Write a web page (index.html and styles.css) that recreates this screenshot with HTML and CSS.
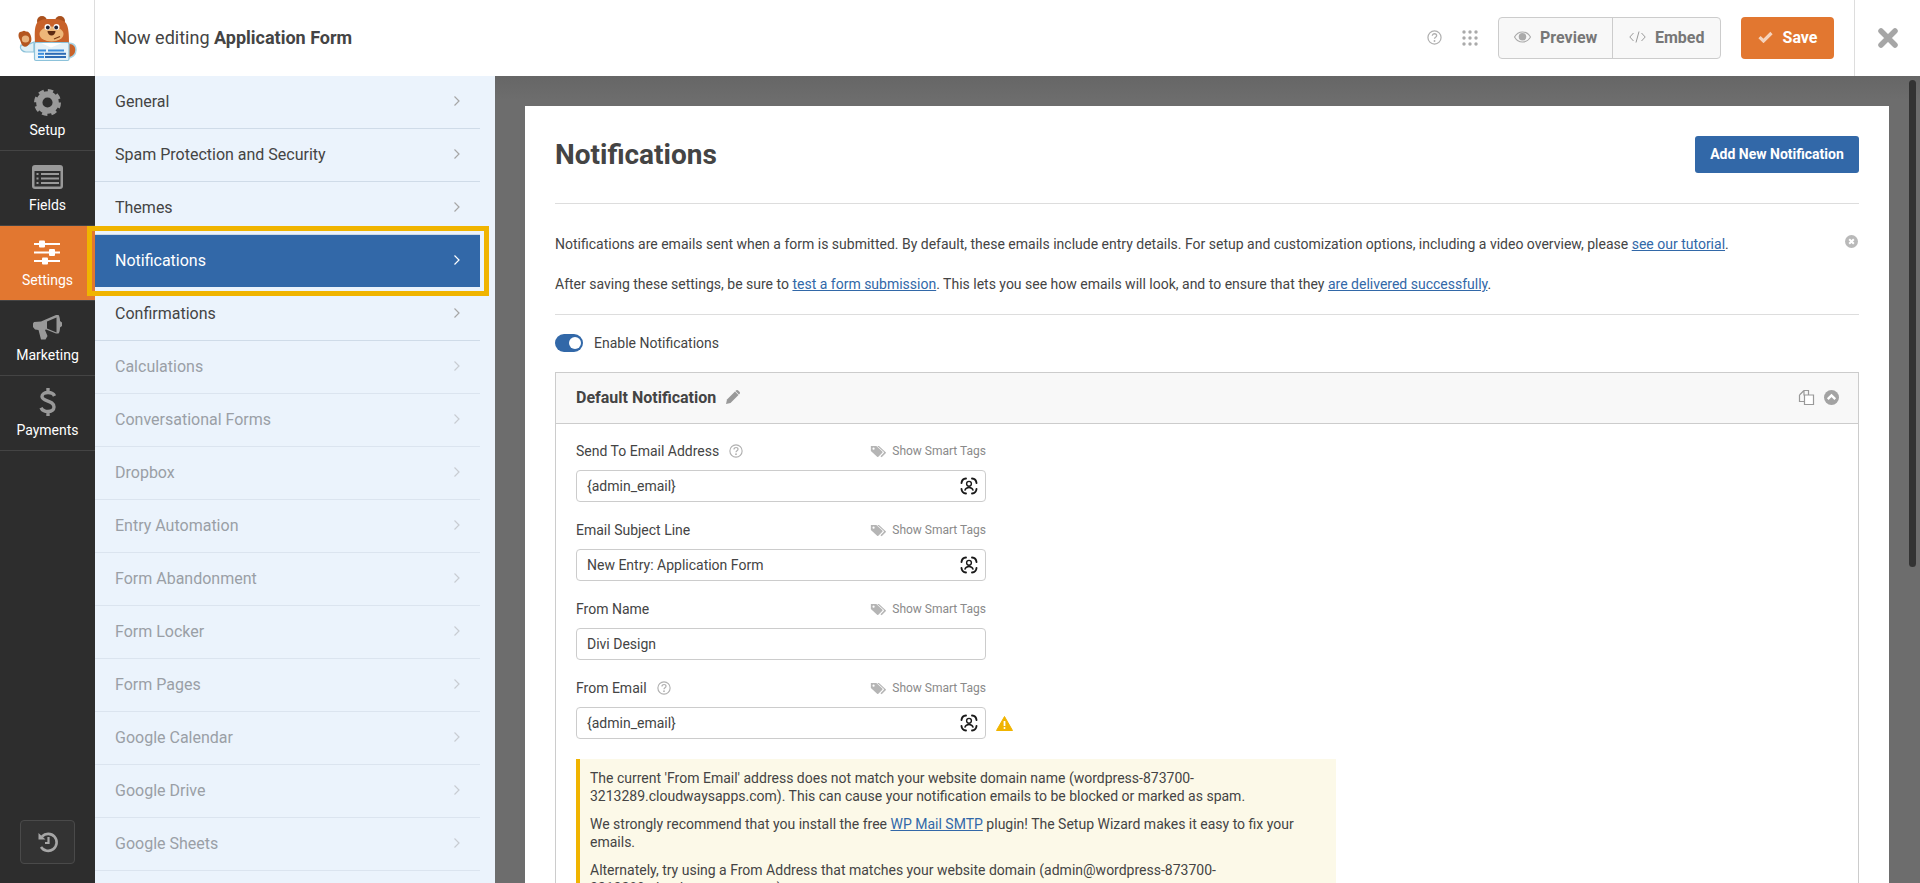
FILE: index.html
```html
<!DOCTYPE html>
<html lang="en">
<head>
<meta charset="utf-8">
<title>Application Form</title>
<link rel="stylesheet" href="styles.css">
</head>
<body>
<svg class="defs" width="0" height="0" aria-hidden="true">
  <symbol id="qm" viewBox="0 0 16 16"><circle cx="8" cy="8" r="7" fill="none" stroke="currentColor" stroke-width="1.300"/><path d="M5.700 6.200c0-1.400 1.100-2.200 2.300-2.200 1.300 0 2.300.8 2.300 2 0 1.700-2.300 1.700-2.300 3.400" fill="none" stroke="currentColor" stroke-width="1.400"/><circle cx="8" cy="11.700" r="1" fill="currentColor"/></symbol>
  <symbol id="tag" viewBox="0 0 20 15"><path d="M1 1h6.500l7 6.600a1 1 0 0 1 0 1.400l-4.700 4.700a1 1 0 0 1-1.400 0L1 6.800z" fill="currentColor"/><path d="M10.500 1l8 7.300a1 1 0 0 1 0 1.400l-4.800 4.600-1.400-1.300 3.800-3.700a1 1 0 0 0 0-1.400L8.500 1z" fill="currentColor"/><circle cx="4.200" cy="4.200" r="1.300" fill="#fff"/></symbol>
  <symbol id="smart" viewBox="0 0 18 18"><g fill="none" stroke="#1a1a1a" stroke-width="1.900" stroke-linecap="round"><path d="M1.500 6C1.700 3.500 3.500 1.700 6 1.500"/><path d="M12 1.500C14.500 1.700 16.300 3.500 16.500 6"/><path d="M1.500 12C1.700 14.500 3.500 16.300 6 16.500"/><path d="M12 16.500C14.500 16.300 16.300 14.500 16.500 12"/></g><circle cx="9" cy="6.800" r="2.400" fill="none" stroke="#1a1a1a" stroke-width="1.400"/><path d="M4.800 13.600c.5-2.200 2.200-3.100 4.200-3.100s3.700.9 4.200 3.100" fill="none" stroke="#1a1a1a" stroke-width="1.400"/></symbol>
  <symbol id="chev" viewBox="0 0 8 12"><path d="M1.500 1.500 6 6l-4.500 4.500" fill="none" stroke="currentColor" stroke-width="1.200"/></symbol>
</svg>

<header class="topbar">
  <div class="logo">
    <svg width="94" height="76" viewBox="0 0 94 76">
      <path d="M66 44c5-2 10 0 10 6 0 5-4 8-9 8z" fill="#c8622a" stroke="#a9d4e6" stroke-width="1.500"/>
      <path d="M21 45c5 1 9-1 13-3v10H26c-3 0-7-3-5-7z" fill="#dff0f6" stroke="#8cc2da" stroke-width="1.200"/>
      <path d="M20 40c-2-3-2-7 0-8l2-.5 2-.8 2 .8 2 .3c3 2 4 7 3 10-2 3-4 5-6 5-3 0-4-4-5-7z" fill="#b4561f"/>
      <ellipse cx="25.500" cy="39" rx="3.700" ry="3.600" fill="#e8b37e"/>
      <circle cx="42" cy="21" r="5" fill="#a9501d"/><circle cx="60" cy="21" r="5" fill="#a9501d"/>
      <path d="M36 25c2-5 6-6 15-6s14 1 16 6c2 5 2 13 2 20H35c0-7-1-15 1-20z" fill="#c8622a"/>
      <ellipse cx="51.500" cy="34" rx="12" ry="7.500" fill="#eeb779"/>
      <circle cx="47.500" cy="27" r="3" fill="#fff"/><circle cx="56.500" cy="27" r="3" fill="#fff"/>
      <circle cx="47.800" cy="27.500" r="1.900" fill="#223"/><circle cx="56.200" cy="27.500" r="1.900" fill="#223"/>
      <path d="M47.500 31h8c0 2.500-2 4.500-4 4.500s-4-2-4-4.500z" fill="#5c2a12"/>
      <path d="M54 39l6-2.500" stroke="#7a3a14" stroke-width="1.300"/>
      <rect x="34.500" y="42.500" width="34.500" height="18" rx="1.500" fill="#e5f2f8" stroke="#8cc2da" stroke-width="1.200"/>
      <path d="M41 43l10 4.500 11-4.500z" fill="#fff"/>
      <rect x="38" y="49.500" width="8" height="2" fill="#3c8ddc"/><rect x="48" y="49.500" width="16" height="2" fill="#3c8ddc"/>
      <rect x="38" y="52.800" width="6" height="2" fill="#3c8ddc"/><rect x="45" y="52.800" width="21" height="2" fill="#2d6bb5"/>
      <rect x="38" y="56" width="6" height="2" fill="#3c8ddc"/><rect x="45" y="56" width="21" height="2" fill="#2d6bb5"/>
    </svg>
  </div>
  <div class="editing">Now editing <strong>Application Form</strong></div>
  <div class="top-actions">
    <svg class="top-help"><use href="#qm"/></svg>
    <svg class="top-grid" viewBox="0 0 16 16">
      <g fill="#aaa"><circle cx="2" cy="2" r="1.700"/><circle cx="8" cy="2" r="1.700"/><circle cx="14" cy="2" r="1.700"/><circle cx="2" cy="8" r="1.700"/><circle cx="8" cy="8" r="1.700"/><circle cx="14" cy="8" r="1.700"/><circle cx="2" cy="14" r="1.700"/><circle cx="8" cy="14" r="1.700"/><circle cx="14" cy="14" r="1.700"/></g>
    </svg>
    <div class="btn-group">
      <div class="btn-light btn-preview">
        <svg width="17" height="12" viewBox="0 0 17 12"><path d="M.5 6C2.500 2.500 5.300 1 8.500 1s6 1.500 8 5c-2 3.500-4.800 5-8 5s-6-1.500-8-5z" fill="none" stroke="#aaa" stroke-width="1.100"/><circle cx="8.500" cy="5.800" r="3.800" fill="#aaa"/></svg>
        <span>Preview</span>
      </div>
      <div class="btn-light btn-embed">
        <svg width="17" height="12" viewBox="0 0 17 12"><path d="M4.500 2 .8 6l3.700 4M12.500 2l3.700 4-3.700 4M10 .5 7 11.500" fill="none" stroke="#999" stroke-width="1"/></svg>
        <span>Embed</span>
      </div>
    </div>
    <div class="btn-save">
      <svg width="15" height="12" viewBox="0 0 15 12"><path d="M1.500 6.200 5.500 10 13.500 2" fill="none" stroke="#f5d3bd" stroke-width="3.200"/></svg>
      <span>Save</span>
    </div>
    <div class="close-zone">
      <svg width="20" height="20" viewBox="0 0 20 20"><path d="M3 3l14 14M17 3 3 17" stroke="#a6a6a6" stroke-width="5.500" stroke-linecap="round"/></svg>
    </div>
  </div>
</header>

<div class="main">
  <nav class="rail">
    <div class="rail-item">
      <div class="rail-icon"><svg width="27" height="27" viewBox="0 0 28 28"><circle cx="14" cy="14" r="8.500" fill="none" stroke="#999" stroke-width="6.500"/><circle cx="14" cy="14" r="12" fill="none" stroke="#999" stroke-width="4" stroke-dasharray="5.400 4.020"/></svg></div>
      <span>Setup</span>
    </div>
    <div class="rail-item">
      <div class="rail-icon"><svg width="31" height="24" viewBox="0 0 31 24"><rect x="0" y="0" width="31" height="24" rx="3" fill="#999"/><rect x="2.500" y="6" width="26" height="15.500" fill="#2d2d2d"/><g fill="#999"><rect x="4.500" y="8" width="2" height="2"/><rect x="4.500" y="12.500" width="2" height="2"/><rect x="4.500" y="17" width="2" height="2"/><rect x="9" y="8" width="18" height="2"/><rect x="9" y="12.500" width="18" height="2"/><rect x="9" y="17" width="18" height="2"/></g></svg></div>
      <span>Fields</span>
    </div>
    <div class="rail-item active">
      <div class="rail-icon"><svg width="28" height="25" viewBox="0 0 28 25"><g fill="#fff"><rect x="0" y="3" width="26" height="2"/><rect x="0" y="11.500" width="26" height="2"/><rect x="0" y="20" width="26" height="2"/><rect x="5" y=".5" width="6" height="7" rx="1"/><rect x="15" y="9" width="6" height="7" rx="1"/><rect x="8" y="17.500" width="6" height="7" rx="1"/></g></svg></div>
      <span>Settings</span>
    </div>
    <div class="rail-item">
      <div class="rail-icon"><svg width="31" height="26" viewBox="0 0 31 26"><path d="M1 9.500 2 8l7-.5 15-6.500h2.500c1 1 1.500 4 1.500 6l2 1.500V12l-2 1.500c0 2-.5 5-1.500 6H24l-10-4-1 .5 2.500 6-2 3.500H9L6.500 16 3 15.500 1 13z" fill="#999"/><path d="M24.500 3.500v15L15 14.600V7.500z" fill="#2d2d2d"/></svg></div>
      <span>Marketing</span>
    </div>
    <div class="rail-item">
      <div class="rail-icon"><svg width="18" height="30" viewBox="0 0 18 30"><path d="M15.500 9c-1-2.500-3.500-3.500-6.500-3.500C5.500 5.500 3 7 3 9.500 3 15 15 12.500 15 20c0 2.800-2.500 4.500-6 4.500-3.200 0-5.800-1.200-7-3.800M9 1v4.500M9 24.500V29" fill="none" stroke="#999" stroke-width="3.400"/></svg></div>
      <span>Payments</span>
    </div>
    <div class="rail-history">
      <svg width="22" height="22" viewBox="0 0 22 22"><path d="M5 5.500A8.500 8.500 0 1 1 4 16" fill="none" stroke="#a6a6a6" stroke-width="2.600"/><path d="M1.500 2 8.500 8.500H1.500z" fill="#a6a6a6"/><path d="M11.500 6v6H8" fill="none" stroke="#a6a6a6" stroke-width="2.200"/></svg>
    </div>
  </nav>

  <aside class="panel">
    <div class="row"><span>General</span><svg class="chev"><use href="#chev"/></svg></div>
    <div class="row"><span>Spam Protection and Security</span><svg class="chev"><use href="#chev"/></svg></div>
    <div class="row"><span>Themes</span><svg class="chev"><use href="#chev"/></svg></div>
    <div class="row current"><span>Notifications</span><svg class="chev"><use href="#chev"/></svg></div>
    <div class="row"><span>Confirmations</span><svg class="chev"><use href="#chev"/></svg></div>
    <div class="row off"><span>Calculations</span><svg class="chev"><use href="#chev"/></svg></div>
    <div class="row off"><span>Conversational Forms</span><svg class="chev"><use href="#chev"/></svg></div>
    <div class="row off"><span>Dropbox</span><svg class="chev"><use href="#chev"/></svg></div>
    <div class="row off"><span>Entry Automation</span><svg class="chev"><use href="#chev"/></svg></div>
    <div class="row off"><span>Form Abandonment</span><svg class="chev"><use href="#chev"/></svg></div>
    <div class="row off"><span>Form Locker</span><svg class="chev"><use href="#chev"/></svg></div>
    <div class="row off"><span>Form Pages</span><svg class="chev"><use href="#chev"/></svg></div>
    <div class="row off"><span>Google Calendar</span><svg class="chev"><use href="#chev"/></svg></div>
    <div class="row off"><span>Google Drive</span><svg class="chev"><use href="#chev"/></svg></div>
    <div class="row off"><span>Google Sheets</span><svg class="chev"><use href="#chev"/></svg></div>
  </aside>

  <main class="content">
    <section class="card">
      <div class="card-head">
        <h1>Notifications</h1>
        <div class="btn-add">Add New Notification</div>
      </div>
      <div class="intro">
        <svg class="dismiss" width="13" height="13" viewBox="0 0 13 13"><circle cx="6.500" cy="6.500" r="6.500" fill="#b9b9b9"/><path d="M4.200 4.200l4.600 4.600M8.800 4.200 4.200 8.800" stroke="#fff" stroke-width="2"/></svg>
        <p>Notifications are emails sent when a form is submitted. By default, these emails include entry details. For setup and customization options, including a video overview, please <a href="#">see our tutorial</a>.</p>
        <p>After saving these settings, be sure to <a href="#">test a form submission</a>. This lets you see how emails will look, and to ensure that they <a href="#">are delivered successfully</a>.</p>
      </div>
      <div class="toggle-row">
        <span class="toggle"></span>
        <span>Enable Notifications</span>
      </div>
      <div class="box">
        <div class="box-head">
          <strong>Default Notification</strong>
          <svg class="pencil" width="14" height="14" viewBox="0 0 14 14"><path d="M0 14l1-4.500L9 1.500 12.500 5l-8 8z" fill="#999"/><path d="M10 .5c.8-.7 1.500-.7 2.200 0l1.300 1.300c.7.700.7 1.400 0 2.200l-.6.600L9.400 1.100z" fill="#999"/></svg>
          <div class="box-tools">
            <svg width="17" height="17" viewBox="0 0 17 17"><path d="M6 6.500V1.500H10.500V6M1.500 6 6 1.500M1.500 6v6.500H6" fill="none" stroke="#999" stroke-width="1.200"/><path d="M6.500 6H15.500V15.500H6.500z" fill="#fff" stroke="#999" stroke-width="1.200"/></svg>
            <svg width="15" height="15" viewBox="0 0 14 14"><circle cx="7" cy="7" r="7" fill="#a3a3a3"/><path d="M3.500 8.500 7 5l3.500 3.500" fill="none" stroke="#fff" stroke-width="2.200"/></svg>
          </div>
        </div>
        <div class="box-body">
          <div class="field">
            <div class="field-top">
              <label>Send To Email Address</label><svg class="field-help"><use href="#qm"/></svg>
              <div class="smart"><svg class="tag"><use href="#tag"/></svg>Show Smart Tags</div>
            </div>
            <div class="input">{admin_email}<svg class="smart-icon"><use href="#smart"/></svg></div>
          </div>
          <div class="field">
            <div class="field-top">
              <label>Email Subject Line</label>
              <div class="smart"><svg class="tag"><use href="#tag"/></svg>Show Smart Tags</div>
            </div>
            <div class="input">New Entry: Application Form<svg class="smart-icon"><use href="#smart"/></svg></div>
          </div>
          <div class="field">
            <div class="field-top">
              <label>From Name</label>
              <div class="smart"><svg class="tag"><use href="#tag"/></svg>Show Smart Tags</div>
            </div>
            <div class="input">Divi Design</div>
          </div>
          <div class="field">
            <div class="field-top">
              <label>From Email</label><svg class="field-help"><use href="#qm"/></svg>
              <div class="smart"><svg class="tag"><use href="#tag"/></svg>Show Smart Tags</div>
            </div>
            <div class="input-wrap">
              <div class="input">{admin_email}<svg class="smart-icon"><use href="#smart"/></svg></div>
              <svg class="warn" width="17" height="15" viewBox="0 0 17 15"><path d="M8.500.5 16.500 14.500H.5z" fill="#f0b400" stroke="#f0b400" stroke-linejoin="round"/><path d="M8.500 5v5" stroke="#fff" stroke-width="1.800"/><circle cx="8.500" cy="12" r="1" fill="#fff"/></svg>
            </div>
          </div>
          <div class="notice">
            <p>The current 'From Email' address does not match your website domain name (wordpress-873700-3213289.cloudwaysapps.com). This can cause your notification emails to be blocked or marked as spam.</p>
            <p>We strongly recommend that you install the free <a href="#">WP Mail SMTP</a> plugin! The Setup Wizard makes it easy to fix your emails.</p>
            <p>Alternately, try using a From Address that matches your website domain (admin@wordpress-873700-3213289.cloudwaysapps.com).</p>
          </div>
        </div>
      </div>
    </section>
  </main>
  <div class="scrollbar"></div>
</div>
<div class="highlight"></div>
</body>
</html>
```
FILE: styles.css
```css
* { box-sizing: border-box; }
html, body { margin: 0; height: 883px; overflow: hidden; }
body { font-family: Roboto, "Liberation Sans", sans-serif; color: #444; display: flex; flex-direction: column; position: relative; background: #fff; }
.defs { position: absolute; }
a { color: #3268a8; text-decoration: underline; }

.topbar { height: 76px; flex: none; display: flex; align-items: center; background: #fff; }
.logo { width: 95px; height: 76px; flex: none; border-right: 1px solid #ddd; }
.logo svg { display: block; }
.editing { margin-left: 19px; font-size: 18px; color: #444; padding-bottom: 2px; }
.editing strong { font-weight: 700; }
.top-actions { margin-left: auto; display: flex; align-items: center; height: 76px; }
.top-help { width: 15px; height: 15px; color: #b0b0b0; margin-right: 20px; margin-bottom: 1px; }
.top-grid { width: 16px; height: 16px; margin-right: 20px; }
.btn-group { display: flex; height: 42px; width: 223px; border: 1px solid #ccc; border-radius: 4px; background: #f8f8f8; }
.btn-light { display: flex; align-items: center; font-size: 16px; font-weight: 700; color: #777; gap: 9px; padding-bottom: 2px; }
.btn-preview { width: 114px; padding-left: 15px; border-right: 1px solid #ccc; }
.btn-embed { flex: 1; padding-left: 16px; }
.btn-save { margin-left: 20px; width: 93px; height: 42px; border-radius: 4px; background: #e27730; color: #fff; font-size: 16px; font-weight: 700; display: flex; align-items: center; justify-content: center; gap: 10px; padding-bottom: 2px; }
.close-zone { margin-left: 20px; width: 66px; height: 76px; border-left: 1px solid #ddd; display: flex; align-items: center; justify-content: center; }

.main { flex: 1; display: flex; min-height: 0; position: relative; }
.rail { width: 95px; flex: none; background: #2d2d2d; display: flex; flex-direction: column; position: relative; }
.rail-item { height: 75px; flex: none; border-bottom: 1px solid #444; display: flex; flex-direction: column; align-items: center; padding-top: 11px; gap: 5px; color: #fff; font-size: 14px; line-height: 16px; }
.rail-icon { height: 30px; display: flex; align-items: center; justify-content: center; }
.rail-item.active { background: #e27730; }
.rail-history { position: absolute; left: 20px; bottom: 19px; width: 55px; height: 44px; border: 1px solid #4a4a4a; border-radius: 4px; background: #333; display: flex; align-items: center; justify-content: center; }

.panel { width: 400px; flex: none; background: #ebf3fc; padding-right: 15px; overflow: hidden; }
.row { height: 53px; display: flex; align-items: center; justify-content: space-between; padding: 0 19px 2px 20px; border-bottom: 1px solid #cfdbe8; font-size: 16px; color: #444; }
.row.off { color: #9a9fa6; border-bottom-color: #dbe4ef; }
.chev { width: 8px; height: 12px; color: #a6a6a6; }
.row.off .chev { color: #c8ccd2; }
.row.current { background: #3268a8; color: #fff; border-bottom-color: #ebf3fc; }
.row.current .chev { color: #fff; }

.content { flex: 1; min-width: 0; background: linear-gradient(#666, #6d6d6d 24px); padding: 30px 31px 0 30px; overflow: hidden; }
.card { background: #fff; padding: 0 30px; height: 900px; }
.card-head { height: 98px; border-bottom: 1px solid #ddd; display: flex; justify-content: space-between; padding-top: 30px; }
h1 { margin: 0; font-size: 28px; line-height: 37px; font-weight: 700; color: #444; }
.btn-add { width: 164px; height: 37px; background: #3268a8; border-radius: 3px; color: #fff; font-size: 14px; font-weight: 700; display: flex; align-items: center; justify-content: center; padding-bottom: 2px; }
.intro { position: relative; height: 111px; border-bottom: 1px solid #ddd; font-size: 14px; line-height: 20px; padding-top: 30px; color: #444; }
.intro p { margin: 0 0 20px; white-space: nowrap; }
.dismiss { position: absolute; right: 1px; top: 31px; }
.toggle-row { height: 57px; display: flex; align-items: center; gap: 11px; font-size: 14px; color: #444; padding-bottom: 1px; }
.toggle { width: 28px; height: 18px; border-radius: 9px; background: #3268a8; position: relative; flex: none; }
.toggle::after { content: ""; position: absolute; right: 2px; top: 3px; width: 12px; height: 12px; border-radius: 50%; background: #fff; }
.box { border: 1px solid #ccc; }
.box-head { height: 51px; background: #f8f8f8; border-bottom: 1px solid #ccc; display: flex; align-items: center; padding: 0 19px 2px 20px; font-size: 16px; color: #444; }
.box-head strong { font-weight: 700; }
.pencil { margin-left: 10px; }
.box-tools { margin-left: auto; display: flex; align-items: center; gap: 9px; }
.box-body { padding: 15px 20px; }
.field { width: 410px; margin-bottom: 16px; }
.field-top { display: flex; align-items: center; height: 24px; margin-bottom: 7px; font-size: 14px; }
.field-help { width: 14px; height: 14px; color: #b0b0b0; margin-left: 10px; }
.smart { margin-left: auto; display: flex; align-items: center; font-size: 12px; color: #8a8a8a; gap: 5px; }
.tag { width: 17px; height: 13px; color: #b5b5b5; }
.input { width: 410px; height: 32px; flex: none; border: 1px solid #ccc; border-radius: 4px; padding: 0 7px 0 10px; display: flex; align-items: center; justify-content: space-between; font-size: 14px; color: #444; background: #fff; }
.smart-icon { width: 18px; height: 18px; }
.input-wrap { display: flex; align-items: center; gap: 10px; width: 440px; }
.notice { width: 760px; margin-top: 20px; background: #fcf9e8; border-left: 4px solid #f0b400; padding: 10px 10px 10px; font-size: 14px; line-height: 18px; color: #444; }
.notice p { margin: 0 0 10px; }

.scrollbar { position: absolute; right: 4px; top: 4px; width: 7px; height: 487px; background: #333; border-radius: 4px; }
.highlight { position: absolute; left: 87px; top: 226px; width: 402px; height: 70px; border: 5px solid #f0b400; }
```
